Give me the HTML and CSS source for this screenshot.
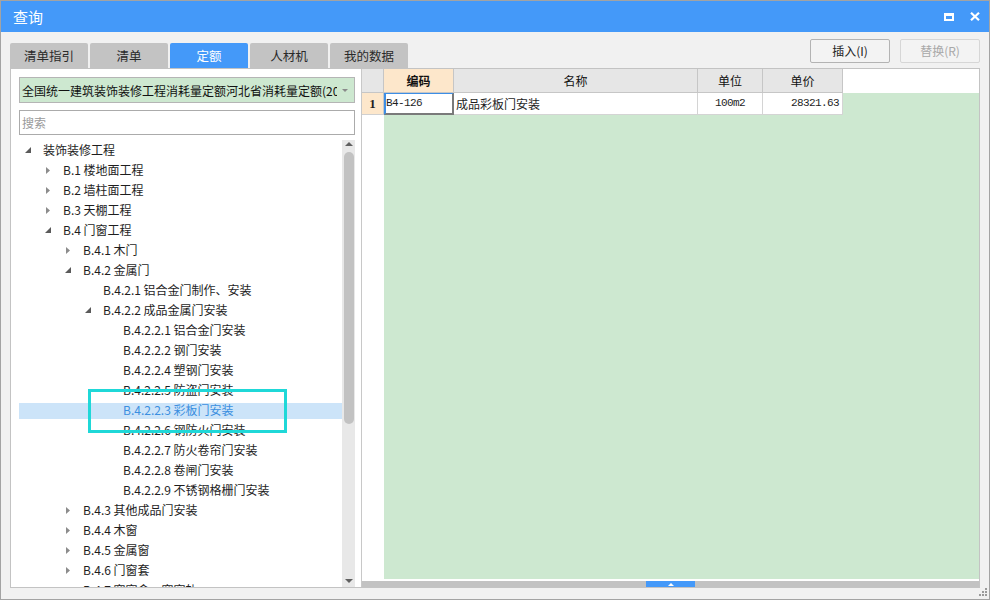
FILE: index.html
```html
<!DOCTYPE html>
<html lang="zh">
<head>
<meta charset="utf-8">
<title>查询</title>
<link rel="stylesheet" href="styles.css">
</head>
<body>
<div class="window">
  <div class="titlebar">
    <span class="title">查询</span>
    <div class="winctrls">
      <svg class="ic-max" width="10" height="8" viewBox="0 0 10 8"><path d="M0 0H10V8H0Z M2 3H8V6H2Z" fill="#fff" fill-rule="evenodd"/></svg>
      <svg class="ic-close" width="10" height="9" viewBox="0 0 10 9"><path d="M1 0.8L9 8.2M9 0.8L1 8.2" stroke="#fff" stroke-width="2.2"/></svg>
    </div>
  </div>
  <div class="body">
    <div class="toolbar">
      <div class="tabs">
        <div class="tab">清单指引</div>
        <div class="tab">清单</div>
        <div class="tab active">定额</div>
        <div class="tab">人材机</div>
        <div class="tab">我的数据</div>
      </div>
      <div class="buttons">
        <div class="btn">插入(I)</div>
        <div class="btn disabled">替换(R)</div>
      </div>
    </div>
    <div class="content">
      <div class="left">
        <div class="select">
          <span class="select-text">全国统一建筑装饰装修工程消耗量定额河北省消耗量定额(2012)</span>
          <svg class="select-arrow" width="6" height="3" viewBox="0 0 6 3"><path d="M0 0H6L3 3Z" fill="#8a8a8a"/></svg>
        </div>
        <div class="search">搜索</div>
        <div class="tree-wrap">
          <div class="tree">
            <div class="row l0"><span class="tog"><svg width="6" height="6" viewBox="0 0 6 6"><path d="M6 0V6H0Z" fill="#5a5a5a"/></svg></span>装饰装修工程</div>
            <div class="row l1"><span class="tog"><svg width="4" height="7" viewBox="0 0 4 7"><path d="M0 0L4 3.5L0 7Z" fill="#8c8c8c"/></svg></span>B.1 楼地面工程</div>
            <div class="row l1"><span class="tog"><svg width="4" height="7" viewBox="0 0 4 7"><path d="M0 0L4 3.5L0 7Z" fill="#8c8c8c"/></svg></span>B.2 墙柱面工程</div>
            <div class="row l1"><span class="tog"><svg width="4" height="7" viewBox="0 0 4 7"><path d="M0 0L4 3.5L0 7Z" fill="#8c8c8c"/></svg></span>B.3 天棚工程</div>
            <div class="row l1"><span class="tog"><svg width="6" height="6" viewBox="0 0 6 6"><path d="M6 0V6H0Z" fill="#5a5a5a"/></svg></span>B.4 门窗工程</div>
            <div class="row l2"><span class="tog"><svg width="4" height="7" viewBox="0 0 4 7"><path d="M0 0L4 3.5L0 7Z" fill="#8c8c8c"/></svg></span>B.4.1 木门</div>
            <div class="row l2"><span class="tog"><svg width="6" height="6" viewBox="0 0 6 6"><path d="M6 0V6H0Z" fill="#5a5a5a"/></svg></span>B.4.2 金属门</div>
            <div class="row l3"><span class="tog"></span>B.4.2.1 铝合金门制作、安装</div>
            <div class="row l3"><span class="tog"><svg width="6" height="6" viewBox="0 0 6 6"><path d="M6 0V6H0Z" fill="#5a5a5a"/></svg></span>B.4.2.2 成品金属门安装</div>
            <div class="row l4"><span class="tog"></span>B.4.2.2.1 铝合金门安装</div>
            <div class="row l4"><span class="tog"></span>B.4.2.2.2 钢门安装</div>
            <div class="row l4"><span class="tog"></span>B.4.2.2.4 塑钢门安装</div>
            <div class="row l4"><span class="tog"></span>B.4.2.2.5 防盗门安装</div>
            <div class="row l4 sel"><span class="tog"></span>B.4.2.2.3 彩板门安装</div>
            <div class="row l4"><span class="tog"></span>B.4.2.2.6 钢防火门安装</div>
            <div class="row l4"><span class="tog"></span>B.4.2.2.7 防火卷帘门安装</div>
            <div class="row l4"><span class="tog"></span>B.4.2.2.8 卷闸门安装</div>
            <div class="row l4"><span class="tog"></span>B.4.2.2.9 不锈钢格栅门安装</div>
            <div class="row l2"><span class="tog"><svg width="4" height="7" viewBox="0 0 4 7"><path d="M0 0L4 3.5L0 7Z" fill="#8c8c8c"/></svg></span>B.4.3 其他成品门安装</div>
            <div class="row l2"><span class="tog"><svg width="4" height="7" viewBox="0 0 4 7"><path d="M0 0L4 3.5L0 7Z" fill="#8c8c8c"/></svg></span>B.4.4 木窗</div>
            <div class="row l2"><span class="tog"><svg width="4" height="7" viewBox="0 0 4 7"><path d="M0 0L4 3.5L0 7Z" fill="#8c8c8c"/></svg></span>B.4.5 金属窗</div>
            <div class="row l2"><span class="tog"><svg width="4" height="7" viewBox="0 0 4 7"><path d="M0 0L4 3.5L0 7Z" fill="#8c8c8c"/></svg></span>B.4.6 门窗套</div>
            <div class="row l2"><span class="tog"><svg width="4" height="7" viewBox="0 0 4 7"><path d="M0 0L4 3.5L0 7Z" fill="#8c8c8c"/></svg></span>B.4.7 窗帘盒、窗帘轨</div>
          </div>
          <div class="vscroll">
            <svg class="vs-up" width="8" height="4" viewBox="0 0 8 4"><path d="M0 4H8L4 0Z" fill="#606060"/></svg>
            <div class="vs-thumb"></div>
            <div class="vs-space"></div>
            <svg class="vs-down" width="8" height="4" viewBox="0 0 8 4"><path d="M0 0H8L4 4Z" fill="#606060"/></svg>
          </div>
          <div class="mark"></div>
        </div>
      </div>
      <div class="grid">
        <div class="ghead">
          <div class="hc rn"></div>
          <div class="hc code">编码</div>
          <div class="hc name">名称</div>
          <div class="hc unit">单位</div>
          <div class="hc price">单价</div>
          <div class="hc fill"></div>
        </div>
        <div class="gbody">
          <div class="rncol"><div class="rn1">1</div></div>
          <div class="darea">
            <div class="drow">
              <div class="dc code">B4-126</div>
              <div class="dc name">成品彩板门安装</div>
              <div class="dc unit">100m2</div>
              <div class="dc price">28321.63</div>
            </div>
          </div>
        </div>
        <div class="gfoot">
          <div class="hscroll"><div class="hs-thumb"><svg width="6" height="3" viewBox="0 0 6 3"><path d="M0 3H6L3 0Z" fill="#fff"/></svg></div></div>
        </div>
      </div>
    </div>
  </div>
  <svg class="grip" width="8" height="8" viewBox="0 0 8 8"><path d="M6 0h2v2h-2z M3 3h2v2h-2z M6 3h2v2h-2z M0 6h2v2h-2z M3 6h2v2h-2z M6 6h2v2h-2z" fill="#9a9a9a"/></svg>
</div>
</body>
</html>
```
FILE: styles.css
```css
html, body {
  margin: 0;
  padding: 0;
}
body {
  font-family: "Noto Sans CJK SC", "Microsoft YaHei", sans-serif;
  font-size: 12px;
  color: #1e1e1e;
  background: #fff;
}
.window {
  width: 990px;
  height: 600px;
  box-sizing: border-box;
  border: 1px solid #a3a3a3;
  background: #f1f1f1;
  display: flex;
  flex-direction: column;
  position: relative;
}
.titlebar {
  height: 31px;
  flex: none;
  background: #4499f9;
  color: #fff;
  display: flex;
  align-items: center;
  justify-content: space-between;
  padding: 0 9px 0 12px;
}
.title {
  font-size: 15px;
  line-height: 20px;
}
.winctrls {
  display: flex;
  align-items: center;
  gap: 16px;
}
.ic-max, .ic-close {
  display: block;
}
.body {
  flex: 1;
  display: flex;
  flex-direction: column;
  padding: 0 9px 11px 9px;
  min-height: 0;
}
.toolbar {
  height: 36px;
  flex: none;
  display: flex;
  justify-content: space-between;
  align-items: flex-end;
}
.tabs {
  display: flex;
  gap: 2px;
}
.tab {
  width: 78px;
  height: 25px;
  box-sizing: border-box;
  background: #c3c3c3;
  border-radius: 2px 2px 0 0;
  text-align: center;
  line-height: 25px;
  color: #2a2a2a;
  font-size: 12.5px;
}
.tab.active {
  background: #4499f9;
  color: #fff;
}
.buttons {
  display: flex;
  gap: 10px;
  align-self: flex-start;
  margin-top: 7px;
}
.btn {
  width: 80px;
  height: 24px;
  box-sizing: border-box;
  border: 1px solid #b3b3b3;
  border-radius: 2px;
  background: #f3f3f3;
  text-align: center;
  line-height: 22px;
  color: #222;
}
.btn.disabled {
  border-color: #d6d6d6;
  color: #a8a8a8;
}
.content {
  height: 520px;
  flex: none;
  box-sizing: border-box;
  border: 1px solid #c3c3c3;
  display: flex;
  background: #fff;
}
.left {
  width: 351px;
  flex: none;
  box-sizing: border-box;
  border-right: 1px solid #c8c8c8;
  padding: 8px 6px 0 8px;
  display: flex;
  flex-direction: column;
}
.select {
  height: 26px;
  flex: none;
  box-sizing: border-box;
  border: 1px solid #b5b5b5;
  background: #cde8d0;
  display: flex;
  align-items: center;
  padding: 0 6px 0 2px;
}
.select-text {
  width: 315px;
  overflow: hidden;
  white-space: nowrap;
  color: #111;
}
.select-arrow {
  margin-left: auto;
  display: block;
}
.search {
  height: 25px;
  flex: none;
  margin-top: 7px;
  box-sizing: border-box;
  border: 1px solid #ababab;
  padding-left: 2px;
  line-height: 23px;
  color: #9a9a9a;
}
.tree-wrap {
  flex: 1;
  min-height: 0;
  margin-top: 5px;
  display: flex;
  position: relative;
  overflow: hidden;
}
.tree {
  flex: 1;
}
.row {
  height: 20px;
  box-sizing: border-box;
  line-height: 20px;
  display: flex;
  align-items: center;
  white-space: nowrap;
  color: #1e1e1e;
}
.row.l0 { padding-left: 4px; }
.row.l1 { padding-left: 24px; }
.row.l2 { padding-left: 44px; }
.row.l3 { padding-left: 64px; }
.row.l4 { padding-left: 84px; }
.row.sel {
  background: linear-gradient(to bottom, transparent 3px, #cce4f9 3px, #cce4f9 19px, transparent 19px);
  color: #3b8fe0;
}
.tog {
  width: 10px;
  height: 16px;
  margin-right: 10px;
  display: flex;
  justify-content: center;
  align-items: center;
  flex: none;
}
.tog svg {
  display: block;
}
.vscroll {
  width: 13px;
  flex: none;
  background: #e8e8e8;
  display: flex;
  flex-direction: column;
  align-items: center;
}
.vs-up {
  display: block;
  margin-top: 2px;
  margin-bottom: 6px;
}
.vs-thumb {
  width: 10px;
  height: 272px;
  border-radius: 5px;
  background: #c2c2c2;
}
.vs-space {
  flex: 1;
}
.vs-down {
  display: block;
  margin-bottom: 4px;
}
.mark {
  position: absolute;
  left: 69px;
  top: 249px;
  width: 199px;
  height: 44px;
  box-sizing: border-box;
  border: 3px solid #1fd8d8;
}
.grid {
  flex: 1;
  display: flex;
  flex-direction: column;
  min-width: 0;
}
.ghead {
  display: flex;
  height: 24px;
  flex: none;
}
.hc {
  box-sizing: border-box;
  border-right: 1px solid #c6c6c6;
  border-bottom: 1px solid #c6c6c6;
  background: #e6e6e6;
  text-align: center;
  line-height: 23px;
  color: #111;
}
.hc.rn { width: 22px; }
.hc.code { width: 70px; background: #fde7cb; font-weight: 700; }
.hc.name { width: 244px; }
.hc.unit { width: 65px; }
.hc.price { width: 80px; }
.hc.fill {
  flex: 1;
  background: #fff;
  border: none;
}
.gbody {
  flex: 1;
  display: flex;
  min-height: 0;
}
.rncol {
  width: 22px;
  flex: none;
  background: #fff;
}
.rn1 {
  height: 22px;
  box-sizing: border-box;
  background: #fde7cb;
  border-right: 1px solid #c6c6c6;
  border-bottom: 1px solid #d0d0d0;
  font-family: "Liberation Serif", serif;
  font-weight: 700;
  font-size: 13px;
  text-align: center;
  line-height: 21px;
}
.darea {
  flex: 1;
  background: #cde8d0;
}
.drow {
  display: flex;
  height: 22px;
}
.dc {
  box-sizing: border-box;
  background: #fff;
  border-right: 1px solid #d4d4d4;
  border-bottom: 1px solid #d4d4d4;
  line-height: 21px;
  white-space: nowrap;
}
.dc.code, .dc.unit, .dc.price {
  font-family: "Liberation Mono", monospace;
  font-size: 11px;
  letter-spacing: -0.6px;
}
.dc.code {
  width: 70px;
  border: 2px solid #7a7a7a;
  border-left: 2px solid #3d8ee5;
  border-top: 1px solid #3d8ee5;
  line-height: 19px;
}
.dc.name {
  width: 244px;
  padding-left: 2px;
}
.dc.unit {
  width: 65px;
  text-align: center;
}
.dc.price {
  width: 80px;
  text-align: right;
  padding-right: 3px;
}
.gfoot {
  height: 8px;
  flex: none;
  box-sizing: border-box;
  padding-top: 2px;
  background: #fff;
}
.hscroll {
  height: 6px;
  background: #c2c2c2;
  display: flex;
  justify-content: center;
}
.hs-thumb {
  width: 49px;
  height: 6px;
  background: #4499f9;
  display: flex;
  justify-content: center;
  align-items: center;
}
.hs-thumb svg {
  display: block;
}
.grip {
  position: absolute;
  right: 2px;
  bottom: 3px;
  display: block;
}
```
